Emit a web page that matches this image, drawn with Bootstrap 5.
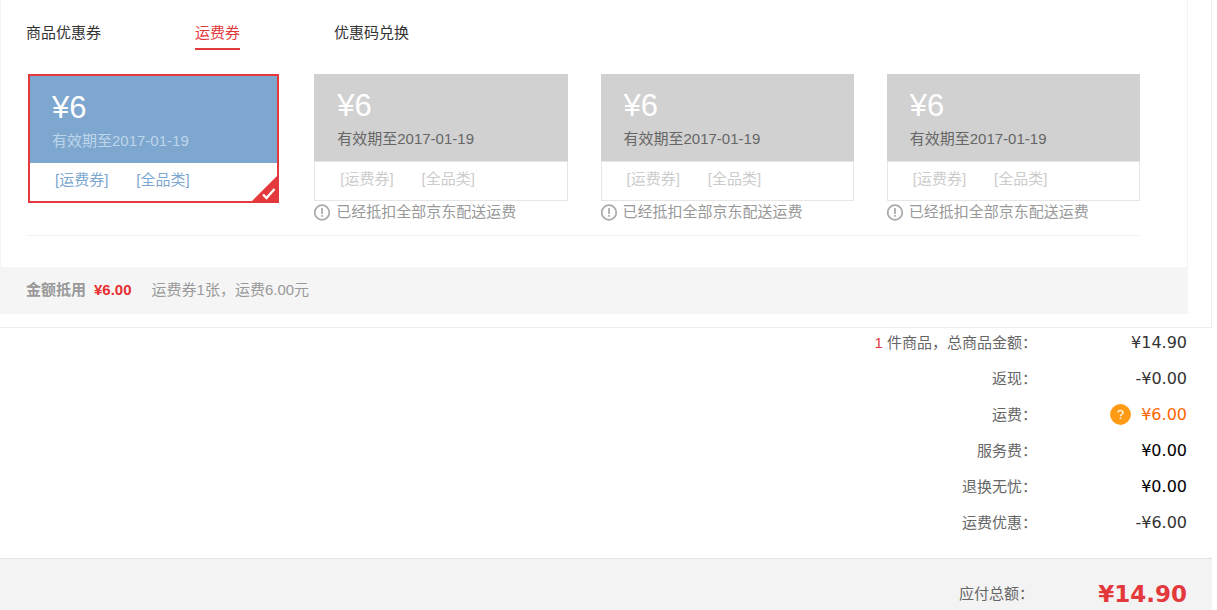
<!DOCTYPE html>
<html lang="zh-CN">
<head>
<meta charset="utf-8">
<meta name="viewport" content="width=device-width, initial-scale=1">
<title>优惠券</title>
<link href="https://cdn.jsdelivr.net/npm/bootstrap@5.3.0/dist/css/bootstrap.min.css" rel="stylesheet">
<style>
  :root { --red: #e4393c; --blue: #7da7cf; }
  body { font: 15px/22px "Liberation Sans", "Noto Sans CJK SC", sans-serif; color: #666; background: #fff; padding-right: 5px; }
  .promo { border-right: 1px solid #ededed; border-bottom: 1px solid #ededed; padding: 0 23px 13px 0; }
  .promo-main { border: solid #f3f3f3; border-width: 0 1px; padding: 22px 47px 31px 25px; }
  .tabs { gap: 94px; margin-bottom: 24px; }
  .tabs a { color: #333; text-decoration: none; padding-bottom: 4px; border-bottom: 2px solid transparent; }
  .tabs a.active { color: var(--red); border-color: var(--red); }
  .coupons { display: grid; grid-template-columns: repeat(4, minmax(0, 1fr)); column-gap: 33px; padding-left: 2px; padding-bottom: 12px; border-bottom: 1px solid #f3f3f3; }
  .coupon { display: block; width: 100%; padding: 0; border: 0; background: #fff; text-align: left; color: #ccc; }
  .coupon-top { display: block; height: 87px; padding: 12px 23px 0; background: #d1d1d1; color: #666; }
  .coupon-top strong { display: block; font-weight: 400; font-size: 31px; line-height: 40px; color: #fff; margin-bottom: 2px; }
  .coupon-tags { display: flex; gap: 28px; height: 40px; padding: 6px 25px 0; border: 1px solid #e6e6e6; }
  .chosen-slot { padding-right: 2px; }
  .coupon.chosen { position: relative; border: 2px solid var(--red); color: var(--blue); }
  .chosen .coupon-top { background: var(--blue); color: #bdd5ea; padding-left: 22px; }
  .chosen .coupon-tags { height: 38px; border: 0; }
  .corner { position: absolute; right: 0; bottom: 0; }
  .reason { gap: 5px; color: #999; }
  .deduct { background: #f5f5f5; color: #999; padding: 12px 26px 13px; }
  .deduct b { font-weight: 700; }
  .deduct .money { color: #e62e31; margin: 0 20px 0 8px; }
  .sums { margin: 0; padding: 4px 25px 24px 0; display: grid; row-gap: 14px; }
  .amount { width: 150px; margin: 0; font-family: "DejaVu Sans", sans-serif; font-size: 16px; color: #333; text-align: right; }
  .sums dt, .total dt { font-weight: 400; }
  .count { color: var(--red); }
  .help { width: 21px; height: 21px; padding: 0; border: 0; background: none; margin-right: 10px; }
  .help svg { display: block; }
  .amount.fee { color: #ff6600; }
  .amount.plain { color: #000; }
  .total { margin: 0; border-top: 1px solid #e2e2e2; background: #f3f3f3; padding: 24px 25px 5px 0; }
  .total .amount { width: 153px; font-size: 23px; font-weight: 700; color: var(--red); }
</style>
</head>
<body>
<section class="promo">
  <div class="promo-main">
    <nav class="tabs d-flex">
      <a href="#goods">商品优惠券</a>
      <a href="#freight" class="active" aria-current="page">运费券</a>
      <a href="#code">优惠码兑换</a>
    </nav>
    <div class="coupons">
      <div class="chosen-slot">
        <button type="button" class="coupon chosen" aria-pressed="true">
          <span class="coupon-top"><strong>¥6</strong>有效期至2017-01-19</span>
          <span class="coupon-tags"><span>[运费券]</span><span>[全品类]</span></span>
          <svg class="corner" width="25" height="25" viewBox="0 0 25 25" aria-hidden="true"><path d="M25 0V25H0Z" fill="#e4393c"/><path d="M11 18.500L14.500 22L22.500 13" fill="none" stroke="#fff" stroke-width="2.400"/></svg>
        </button>
      </div>
      <div>
        <button type="button" class="coupon" disabled>
          <span class="coupon-top"><strong>¥6</strong>有效期至2017-01-19</span>
          <span class="coupon-tags"><span>[运费券]</span><span>[全品类]</span></span>
        </button>
        <div class="reason d-flex align-items-center"><svg width="17" height="18" viewBox="0 0 17 18" aria-hidden="true"><circle cx="8" cy="9.500" r="7.300" fill="none" stroke="#aaa" stroke-width="1.700"/><path d="M8 5V11M8 12V13.800" stroke="#aaa" stroke-width="1.700"/></svg>已经抵扣全部京东配送运费</div>
      </div>
      <div>
        <button type="button" class="coupon" disabled>
          <span class="coupon-top"><strong>¥6</strong>有效期至2017-01-19</span>
          <span class="coupon-tags"><span>[运费券]</span><span>[全品类]</span></span>
        </button>
        <div class="reason d-flex align-items-center"><svg width="17" height="18" viewBox="0 0 17 18" aria-hidden="true"><circle cx="8" cy="9.500" r="7.300" fill="none" stroke="#aaa" stroke-width="1.700"/><path d="M8 5V11M8 12V13.800" stroke="#aaa" stroke-width="1.700"/></svg>已经抵扣全部京东配送运费</div>
      </div>
      <div>
        <button type="button" class="coupon" disabled>
          <span class="coupon-top"><strong>¥6</strong>有效期至2017-01-19</span>
          <span class="coupon-tags"><span>[运费券]</span><span>[全品类]</span></span>
        </button>
        <div class="reason d-flex align-items-center"><svg width="17" height="18" viewBox="0 0 17 18" aria-hidden="true"><circle cx="8" cy="9.500" r="7.300" fill="none" stroke="#aaa" stroke-width="1.700"/><path d="M8 5V11M8 12V13.800" stroke="#aaa" stroke-width="1.700"/></svg>已经抵扣全部京东配送运费</div>
      </div>
    </div>
  </div>
  <div class="deduct d-flex"><b>金额抵用</b><b class="money">¥6.00</b><span>运费券1张，运费6.00元</span></div>
</section>
<dl class="sums">
  <div class="d-flex justify-content-end"><dt><span class="count">1</span> 件商品，总商品金额：</dt><dd class="amount">¥14.90</dd></div>
  <div class="d-flex justify-content-end"><dt>返现：</dt><dd class="amount">-¥0.00</dd></div>
  <div class="d-flex justify-content-end"><dt>运费：</dt><dd class="amount fee d-flex justify-content-end"><button type="button" class="help" aria-label="运费说明"><svg width="21" height="21" viewBox="0 0 21 21" aria-hidden="true"><circle cx="10.500" cy="10.500" r="10.400" fill="#ff9a14"/><path d="M8 8.600Q8 6.500 10.500 6.500Q13 6.500 13 8.600Q13 9.800 11.500 10.600Q10.500 11.200 10.500 12.300M10.500 13.500V15" fill="none" stroke="#fff1d8" stroke-width="1.600"/></svg></button>¥6.00</dd></div>
  <div class="d-flex justify-content-end"><dt>服务费：</dt><dd class="amount plain">¥0.00</dd></div>
  <div class="d-flex justify-content-end"><dt>退换无忧：</dt><dd class="amount plain">¥0.00</dd></div>
  <div class="d-flex justify-content-end"><dt>运费优惠：</dt><dd class="amount">-¥6.00</dd></div>
</dl>
<dl class="total d-flex justify-content-end"><dt>应付总额：</dt><dd class="amount">¥14.90</dd></dl>
</body>
</html>
